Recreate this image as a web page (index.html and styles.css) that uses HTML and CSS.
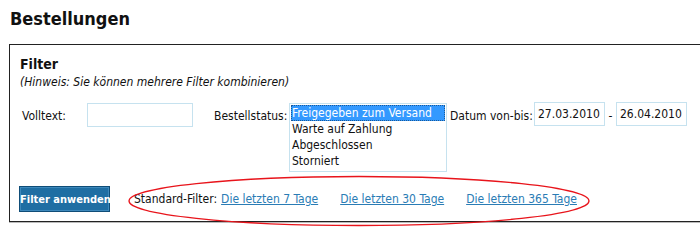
FILE: index.html
```html
<!DOCTYPE html>
<html lang="de">
<head>
<meta charset="utf-8">
<title>Bestellungen</title>
<link rel="stylesheet" href="styles.css">
</head>
<body>
<h1 class="page-title">Bestellungen</h1>
<div class="filter-box">
  <h2 class="filter-title">Filter</h2>
  <p class="hint">(Hinweis: Sie können mehrere Filter kombinieren)</p>
  <div class="filter-row">
    <label class="lbl lbl-volltext">Volltext:</label>
    <input class="txt txt-volltext" type="text">
    <label class="lbl lbl-status">Bestellstatus:</label>
    <div class="listbox">
      <div class="opt opt-selected">Freigegeben zum Versand</div>
      <div class="opt">Warte auf Zahlung</div>
      <div class="opt">Abgeschlossen</div>
      <div class="opt">Storniert</div>
    </div>
    <label class="lbl lbl-datum">Datum von-bis:</label>
    <input class="txt txt-date" type="text" value="27.03.2010">
    <span class="dash">-</span>
    <input class="txt txt-date" type="text" value="26.04.2010">
  </div>
  <div class="action-row">
    <button class="btn" type="button">Filter anwenden</button>
    <div class="std-filter">
      <span class="std-label">Standard-Filter:</span>
      <a class="std-link" href="#">Die letzten 7 Tage</a>
      <a class="std-link" href="#">Die letzten 30 Tage</a>
      <a class="std-link" href="#">Die letzten 365 Tage</a>
      <svg class="ellipse" width="466" height="52" viewBox="0 0 466 52"><ellipse cx="231" cy="26" rx="230" ry="24.5" fill="none" stroke="#e8141b" stroke-width="1.3"/></svg>
    </div>
  </div>
</div>
</body>
</html>
```
FILE: styles.css
```css
html, body {
  margin: 0;
  padding: 0;
  background: #fff;
  overflow: hidden;
}
body {
  font-family: "DejaVu Sans Condensed", "DejaVu Sans", sans-serif;
  font-size: 12px;
  color: #111;
  width: 700px;
  height: 242px;
}
.page-title {
  margin: 0;
  padding: 7px 0 0 10px;
  font-size: 18px;
  line-height: 24px;
  font-weight: bold;
  height: 37px;
}
.filter-box {
  margin-left: 9px;
  width: 720px;
  height: 178px;
  border: 1px solid #222;
  box-shadow: 0 1px 0 #bbb;
  box-sizing: border-box;
  padding: 9px 0 0 10px;
}
.filter-title {
  margin: 0;
  font-size: 14px;
  line-height: 20px;
  font-weight: bold;
}
.hint {
  margin: 0;
  font-style: italic;
  font-size: 12px;
  line-height: 16px;
}
.filter-row {
  display: flex;
  align-items: flex-start;
  margin-top: 13px;
}
.lbl {
  line-height: 16px;
  padding-top: 5px;
}
.lbl-volltext { margin-left: 2px; width: 65px; }
.lbl-status { margin-left: 21px; width: 75px; }
.lbl-datum { margin-left: 3px; width: 84px; }
.txt {
  box-sizing: border-box;
  height: 24px;
  border: 1px solid #c6e2ef;
  font-family: inherit;
  font-size: 12px;
  padding: 0 3px;
  color: #111;
  margin: 0;
}
.txt-volltext { width: 106px; }
.txt-date { width: 71px; margin-top: -1px; }
.dash { width: 11px; text-align: center; line-height: 16px; padding-top: 5px; }
.listbox {
  box-sizing: border-box;
  width: 158px;
  height: 69px;
  border: 1px solid #c6e2ef;
  padding: 1px;
}
.opt {
  line-height: 16px;
  padding-left: 1px;
  white-space: nowrap;
}
.opt-selected {
  background: #3399ff;
  color: #fff;
  outline: 1px dotted #1a5a99;
  outline-offset: -1px;
}
.action-row {
  display: flex;
  align-items: center;
  margin-top: 14px;
  margin-left: -1px;
}
.btn {
  width: 91px;
  height: 26px;
  box-sizing: border-box;
  background: #1f6ea3;
  border: 1px solid #0f4d78;
  box-shadow: inset 0 0 0 1px #3d88bb;
  color: #fff;
  font-family: inherit;
  font-size: 11px;
  font-weight: bold;
  white-space: nowrap;
  padding: 0;
}
.std-filter {
  position: relative;
  display: flex;
  align-items: center;
  margin-left: 24px;
}
.std-label { margin-right: 4px; }
.std-link {
  color: #2a7cb5;
  text-decoration: underline;
  margin-right: 22px;
}
.ellipse {
  position: absolute;
  left: -6px;
  top: -17px;
}
```
